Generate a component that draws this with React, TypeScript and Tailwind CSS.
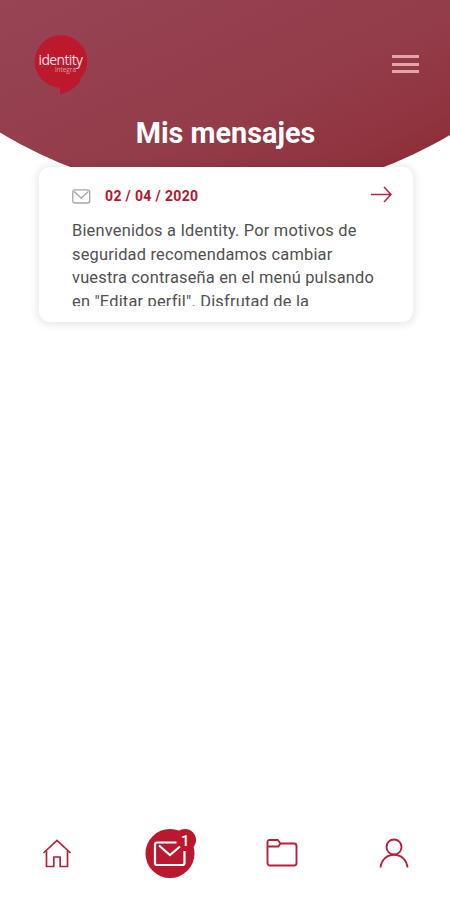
import React from 'react';

const messages = [
  {
    id: 1,
    date: '02 / 04 / 2020',
    text: 'Bienvenidos a Identity. Por motivos de seguridad recomendamos cambiar vuestra contraseña en el menú pulsando en "Editar perfil". Disfrutad de la',
  },
];

const Logo = () => (
  <svg width="56" height="62" viewBox="0 0 56 62">
    <circle cx="28" cy="27.500" r="26.300" fill="#bd192d" />
    <path d="M27 51v9.500c9-2.500 16-7 21-14.500z" fill="#bd192d" />
    <text x="5.500" y="31" fontSize="14" textLength="44.500" fill="#f6dfe1" fontFamily="Open Sans, sans-serif">
      identity
    </text>
    <text x="22" y="37.500" fontSize="6.500" textLength="21" fill="#e09aa1" fontFamily="Open Sans, sans-serif">
      integra
    </text>
  </svg>
);

const MessageCard = ({ date, text }: { date: string; text: string }) => (
  <div className="h-[155px] rounded-[11px] bg-white pr-[21px] pl-[33px] shadow-[0_1px_7px_3px_rgba(0,0,0,0.08)]">
    <div className="flex h-[52px] items-center pt-[6px]">
      <svg width="19" height="15" viewBox="0 0 19 15" fill="none" stroke="#a5a5a5" strokeWidth="1.300">
        <rect x="0.800" y="0.800" width="16.900" height="13.200" rx="2" />
        <path d="M2 2.500l7.200 6.500 7.200-6.500" />
      </svg>
      <span className="ml-[14px] text-[14px] font-bold tracking-[0.350px] text-[#b0162f]">
        {date}
      </span>
      <svg
        className="mb-[4px] ml-auto"
        width="22"
        height="17"
        viewBox="0 0 22 17"
        fill="none"
        stroke="#b4233b"
        strokeWidth="1.500"
      >
        <path d="M1 8.500h20M14 1l7 7.500-7 7.500" />
      </svg>
    </div>
    <p className="h-[87px] w-[312px] overflow-hidden text-[16.400px] leading-[23.700px] tracking-[0.200px] text-[#505050]">
      {text}
    </p>
  </div>
);

const BottomNav = () => (
  <nav className="flex h-[94px] items-center pl-[1px]">
    <button className="flex w-[112px] justify-center">
      <svg width="30" height="30" viewBox="0 0 30 30" fill="none" stroke="#b4213a" strokeWidth="1.700">
        <path d="M1.500 15L15 2.500 28.500 15" />
        <path d="M4.500 13v15.500h7.300v-9.500h6.400v9.500h7.300V13" strokeLinejoin="round" />
      </svg>
    </button>
    <button className="flex w-[114px] justify-center">
      <svg width="52" height="52" viewBox="0 0 52 52" fill="none">
        <circle cx="26" cy="26.500" r="24.500" fill="#b9182e" />
        <circle cx="41" cy="13" r="11" fill="#b9182e" />
        <path
          d="M32.500 15.500H13a2 2 0 0 0-2 2V36a2 2 0 0 0 2 2h25.500a2 2 0 0 0 2-2V24"
          stroke="#fff"
          strokeWidth="2.200"
        />
        <path d="M15 18.500l11 9.500 10-8.500" stroke="#fff" strokeWidth="2.200" />
        <text x="37" y="18.500" fontSize="15" fontWeight="500" fill="#fff" fontFamily="Roboto, sans-serif">
          1
        </text>
      </svg>
    </button>
    <button className="flex w-[112px] justify-center">
      <svg width="32" height="28" viewBox="0 0 32 28" fill="none" stroke="#b4213a" strokeWidth="1.900">
        <path d="M1.500 7.500V3a2 2 0 0 1 2-2h8.300l2.600 3.500H28a2.500 2.500 0 0 1 2.500 2.500v17a2.500 2.500 0 0 1-2.500 2.500H4A2.500 2.500 0 0 1 1.500 24V7.500h10.800l2.100-3" />
      </svg>
    </button>
    <button className="flex w-[112px] justify-center">
      <svg width="30" height="30" viewBox="0 0 30 30" fill="none" stroke="#b4213a" strokeWidth="1.900">
        <circle cx="15" cy="9" r="7.500" />
        <path d="M1.500 29.500C2.500 21.500 8 16.700 15 16.700S27.500 21.500 28.500 29.500" />
      </svg>
    </button>
  </nav>
);

const App = () => {
  return (
    <div className="flex h-[900px] w-[450px] flex-col overflow-hidden bg-white font-['Roboto',sans-serif]">
      <header className="h-[200px] shrink-0 bg-linear-[155deg,#974455_0%,#933c4a_55%,#90343f_78%,#8e2229_100%] [clip-path:circle(438px_at_227px_-242px)]">
        <div className="flex items-start justify-between pt-[34px] pr-[31px] pl-[33px]">
          <Logo />
          <button className="mt-[21px] flex w-[27px] flex-col gap-[4.500px]">
            <span className="h-[3px] bg-[#e5a3aa]" />
            <span className="h-[3px] bg-[#e5a3aa]" />
            <span className="h-[3px] bg-[#e5a3aa]" />
          </button>
        </div>
        <h1 className="mt-[19px] pl-[1px] text-center text-[28.800px] leading-[36px] font-bold text-white">
          Mis mensajes
        </h1>
      </header>
      <main className="relative -mt-[33px] flex-1 pr-[37px] pl-[39px]">
        {messages.map((message) => (
          <MessageCard key={message.id} date={message.date} text={message.text} />
        ))}
      </main>
      <BottomNav />
    </div>
  );
};

export default App;
